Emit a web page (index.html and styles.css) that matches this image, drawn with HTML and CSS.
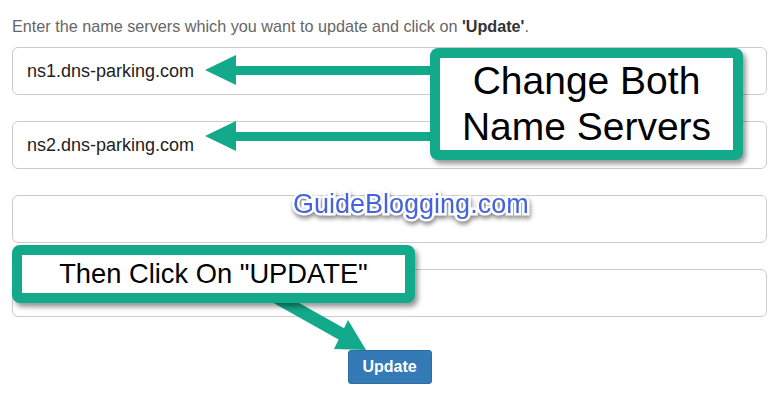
FILE: index.html
```html
<!DOCTYPE html>
<html lang="en">
<head>
  <meta charset="UTF-8" />
  <meta name="viewport" content="width=device-width, initial-scale=1.0"/>
  <title>Update Name Servers</title>
  <link rel="stylesheet" href="styles.css">
</head>
<body>
  <div class="page">
    <p class="intro">Enter the name servers which you want to update and click on <b>'Update'</b>.</p>

    <!-- Name server form -->
    <form class="ns-form">
      <input class="ns-input" type="text" value="ns1.dns-parking.com">
      <input class="ns-input" type="text" value="ns2.dns-parking.com">
      <input class="ns-input" type="text" value="">
      <input class="ns-input" type="text" value="">
      <div class="actions">
        <button class="btn-update" type="button">Update</button>
      </div>
    </form>

    <!-- Annotations -->
    <svg class="arrows" width="775" height="412" viewBox="0 0 775 412">
      <g fill="#13a98b">
        <rect x="230" y="66" width="210" height="9"/>
        <polygon points="205,70 236,55 236,85"/>
        <rect x="230" y="132" width="210" height="9"/>
        <polygon points="205,136 236,121 236,151"/>
        <polygon points="276,290 349,331 343,342 270,301"/>
        <polygon points="348,320 334,349 366,350"/>
      </g>
    </svg>

    <div class="callout callout-both">Change Both<br>Name Servers</div>
    <div class="callout callout-update">Then Click On "UPDATE"</div>
    <div class="watermark">GuideBlogging.com</div>
  </div>
</body>
</html>
```

FILE: styles.css
```css
:root {
  --green: #13a98b;
  --border: #cccccc;
  --primary: #337ab7;
}

body {
  margin: 0;
  font-family: "Liberation Sans", Arial, sans-serif;
  background: #ffffff;
}

.page {
  position: relative;
  width: 775px;
  height: 412px;
  padding: 16px 8px 0 12px;
  box-sizing: border-box;
  overflow: hidden;
}

.intro {
  margin: 0;
  font-size: 16.2px;
  line-height: 20px;
  color: #666666;
}

.intro b {
  color: #333333;
}

.ns-form {
  display: flex;
  flex-direction: column;
  gap: 26px;
  margin-top: 11px;
}

.ns-input {
  height: 48px;
  box-sizing: border-box;
  border: 1px solid var(--border);
  border-radius: 6px;
  padding: 0 14px;
  font-family: "Liberation Sans", Arial, sans-serif;
  font-size: 18px;
  color: #222222;
  background: #ffffff;
}

.actions {
  display: flex;
  justify-content: center;
  margin-top: 7px;
}

.btn-update {
  width: 84px;
  height: 34px;
  padding: 0;
  border: 1px solid #2e6da4;
  border-radius: 3px;
  background: var(--primary);
  color: #ffffff;
  font-family: "Liberation Sans", Arial, sans-serif;
  font-size: 16px;
  font-weight: bold;
}

.arrows {
  position: absolute;
  top: 0;
  left: 0;
  pointer-events: none;
}

.callout {
  position: absolute;
  border: 10px solid var(--green);
  border-radius: 8px;
  background: #ffffff;
  color: #000000;
  text-align: center;
  box-shadow: 3px 4px 5px rgba(0, 0, 0, 0.4);
}

.callout-both {
  left: 430px;
  top: 48px;
  width: 293px;
  font-size: 39px;
  line-height: 46px;
}

.callout-update {
  left: 12px;
  top: 245px;
  width: 383px;
  font-size: 27.3px;
  line-height: 38px;
}

.watermark {
  position: absolute;
  left: 293px;
  top: 188px;
  font-size: 27px;
  line-height: 32px;
  color: #4563de;
  -webkit-text-stroke: 5px #ffffff;
  paint-order: stroke fill;
  filter: drop-shadow(1px 3px 2px rgba(0, 0, 0, 0.45));
}
```
